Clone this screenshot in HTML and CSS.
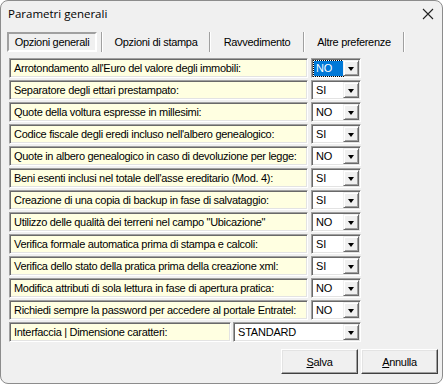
FILE: index.html
```html
<!DOCTYPE html>
<html lang="it">
<head>
    <meta charset="UTF-8">
    <title>Parametri generali</title>
    <link rel="stylesheet" href="styles.css">
</head>
<body>
<div class="window">
    <div class="titlebar">
        <span class="title">Parametri generali</span>
        <svg class="close" width="12" height="12" viewBox="0 0 12 12">
            <path d="M1 1 L11 11 M11 1 L1 11" stroke="#222" stroke-width="1.1" fill="none"/>
        </svg>
    </div>

    <div class="tabs">
        <div class="tab active">Opzioni generali</div>
        <span class="sep"></span>
        <div class="tab tab-print">Opzioni di stampa</div>
        <span class="sep"></span>
        <div class="tab tab-ravv">Ravvedimento</div>
        <span class="sep"></span>
        <div class="tab tab-other">Altre preferenze</div>
        <span class="sep"></span>
    </div>

    <div class="options">
        <div class="row">
            <div class="label">Arrotondamento all'Euro del valore degli immobili:</div>
            <div class="combo"><span class="value focused">NO</span><span class="drop"></span></div>
        </div>
        <div class="row">
            <div class="label">Separatore degli ettari prestampato:</div>
            <div class="combo"><span class="value">SI</span><span class="drop"></span></div>
        </div>
        <div class="row">
            <div class="label">Quote della voltura espresse in millesimi:</div>
            <div class="combo"><span class="value">NO</span><span class="drop"></span></div>
        </div>
        <div class="row">
            <div class="label">Codice fiscale degli eredi incluso nell'albero genealogico:</div>
            <div class="combo"><span class="value">SI</span><span class="drop"></span></div>
        </div>
        <div class="row">
            <div class="label">Quote in albero genealogico in caso di devoluzione per legge:</div>
            <div class="combo"><span class="value">NO</span><span class="drop"></span></div>
        </div>
        <div class="row">
            <div class="label">Beni esenti inclusi nel totale dell'asse ereditario (Mod. 4):</div>
            <div class="combo"><span class="value">SI</span><span class="drop"></span></div>
        </div>
        <div class="row">
            <div class="label">Creazione di una copia di backup in fase di salvataggio:</div>
            <div class="combo"><span class="value">SI</span><span class="drop"></span></div>
        </div>
        <div class="row">
            <div class="label">Utilizzo delle qualità dei terreni nel campo "Ubicazione"</div>
            <div class="combo"><span class="value">NO</span><span class="drop"></span></div>
        </div>
        <div class="row">
            <div class="label">Verifica formale automatica prima di stampa e calcoli:</div>
            <div class="combo"><span class="value">SI</span><span class="drop"></span></div>
        </div>
        <div class="row">
            <div class="label">Verifica dello stato della pratica prima della creazione xml:</div>
            <div class="combo"><span class="value">SI</span><span class="drop"></span></div>
        </div>
        <div class="row">
            <div class="label">Modifica attributi di sola lettura in fase di apertura pratica:</div>
            <div class="combo"><span class="value">NO</span><span class="drop"></span></div>
        </div>
        <div class="row">
            <div class="label">Richiedi sempre la password per accedere al portale Entratel:</div>
            <div class="combo"><span class="value">NO</span><span class="drop"></span></div>
        </div>
        <div class="row row-wide">
            <div class="label">Interfaccia | Dimensione caratteri:</div>
            <div class="combo"><span class="value">STANDARD</span><span class="drop"></span></div>
        </div>
    </div>

    <div class="buttons">
        <button class="btn"><u>S</u>alva</button>
        <button class="btn"><u>A</u>nnulla</button>
    </div>
</div>
</body>
</html>
```

FILE: styles.css
```css
body {
    margin: 0;
    background: #ffffff;
    font-family: "Liberation Sans", Arial, sans-serif;
    font-size: 11px;
    color: #000;
}
.window {
    width: 443px;
    height: 384px;
    box-sizing: border-box;
    border: 1px solid #8c8c8c;
    border-radius: 8px;
    background: #f0f0f0;
    overflow: hidden;
}
.titlebar {
    height: 30px;
    display: flex;
    align-items: center;
    justify-content: space-between;
    padding: 0 8px 0 7px;
}
.title {
    font-family: "Open Sans", "Liberation Sans", sans-serif;
    font-size: 11.5px;
    margin-top: -5px;
}
.close {
    margin-top: -5px;
}

/* tabs */
.tabs {
    display: flex;
    align-items: stretch;
    height: 20px;
    margin-top: 1px;
    padding-left: 6px;
}
.tab {
    display: flex;
    align-items: center;
    justify-content: center;
    letter-spacing: -0.3px;
}
.tab.active {
    width: 86px;
    border: 2px solid;
    border-color: #a0a0a0 #ffffff #ffffff #a0a0a0;
    margin-right: 4px;
}
.tab-print { width: 106px; }
.tab-ravv { width: 92px; }
.tab-other { width: 98px; }
.sep {
    width: 1px;
    border-left: 1px solid #a0a0a0;
    background: #fff;
}

/* option rows */
.options {
    display: flex;
    flex-direction: column;
    gap: 2px;
    margin-top: 6px;
    padding-left: 8px;
}
.row {
    display: flex;
    gap: 3px;
    height: 20px;
}
.label, .combo {
    box-sizing: border-box;
    height: 20px;
    border: 1px solid;
    border-color: #a0a0a0 #ffffff #ffffff #a0a0a0;
    box-shadow: inset 1px 1px 0 #696969, inset -1px -1px 0 #e3e3e3;
    display: flex;
    align-items: center;
}
.label {
    width: 299px;
    background: #ffffe1;
    padding-left: 4px;
    letter-spacing: -0.3px;
    white-space: nowrap;
}
.combo {
    width: 50px;
    background: #fff;
    padding: 1px 1px 1px 2px;
    justify-content: space-between;
}
.row-wide {
    gap: 2px;
}
.row-wide .label {
    width: 222px;
}
.row-wide .combo {
    width: 128px;
}
.value {
    height: 15px;
    line-height: 15px;
    padding: 0 2px;
    letter-spacing: -0.2px;
}
.value.focused {
    width: 25px;
    background: #0078d7;
    color: #fff;
    outline: 1px dotted #000;
    outline-offset: 0;
}
.drop {
    width: 16px;
    height: 16px;
    box-sizing: border-box;
    background: #f0f0f0;
    border: 1px solid;
    border-color: #f0f0f0 #696969 #696969 #f0f0f0;
    box-shadow: inset 1px 1px 0 #fff, inset -1px -1px 0 #a0a0a0;
    position: relative;
}
.drop::after {
    content: "";
    position: absolute;
    left: 4px;
    top: 6px;
    border-left: 3.5px solid transparent;
    border-right: 3.5px solid transparent;
    border-top: 4px solid #000;
}

/* buttons */
.buttons {
    display: flex;
    justify-content: flex-end;
    gap: 3px;
    margin-top: 7px;
    padding-right: 4px;
}
.btn {
    width: 77px;
    height: 25px;
    font-family: "Liberation Sans", Arial, sans-serif;
    font-size: 11px;
    letter-spacing: -0.3px;
    background: #f0f0f0;
    border: 1px solid;
    border-color: #fff #404040 #404040 #fff;
    box-shadow: inset -1px -1px 0 #a0a0a0, inset 1px 1px 0 #e3e3e3;
    padding: 0;
    color: #000;
}
```
